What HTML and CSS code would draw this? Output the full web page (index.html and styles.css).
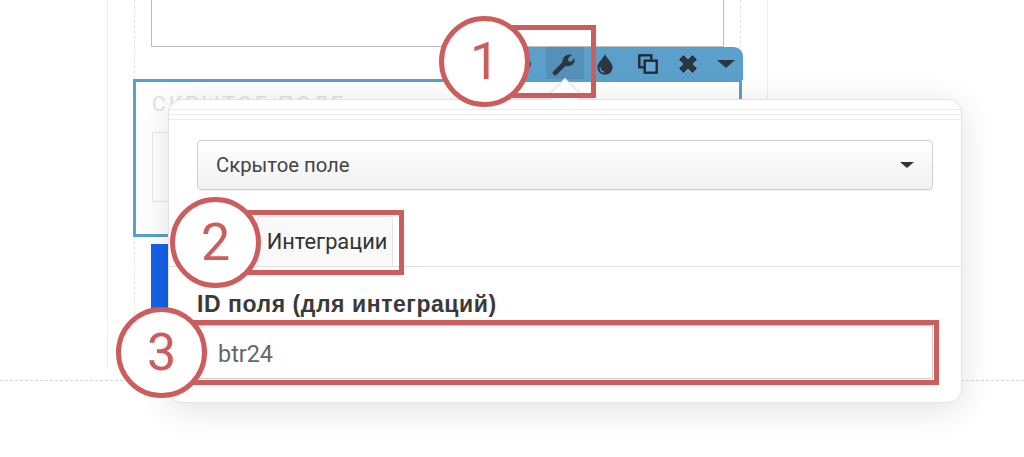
FILE: index.html
```html
<!DOCTYPE html>
<html lang="ru">
<head>
<meta charset="utf-8">
<title>Скрытое поле</title>
<link rel="stylesheet" href="styles.css">
</head>
<body>
<div class="stage">
  <div class="page">
    <div class="column">
      <div class="textarea"></div>
      <div class="toolbar">
        <span class="tool tool-eye"><i class="eye-dot"></i></span>
        <span class="tool tool-active"><svg viewBox="0 0 24 24" width="25" height="25"><path d="M4 21 12.500 12.500" fill="none" stroke="#2b3640" stroke-width="4.600" stroke-linecap="round"/><path d="M11.500 13.500C10 9.500 11.500 5.500 15 4c1.700-.8 3.500-.8 5-.2l-3.700 3.400.4 2.600 2.600.4 3.300-3.300c.5 1.700.2 3.600-1 5.100-2 2.700-5.600 3.300-8.600 2z" fill="#2b3640"/></svg></span>
        <span class="tool tool-drop"><svg viewBox="0 0 20 24" width="18" height="22"><path d="M10 1c1.500 4.500 8.500 9.500 8.500 15a8.500 8 0 0 1-17 0C1.500 10.500 8.500 5.500 10 1z" fill="#2b3640"/><path d="M4.500 15.500c0 3 1.800 5 4.500 5.500" fill="none" stroke="#5b9fcb" stroke-width="1.500"/></svg></span>
        <span class="tool tool-copy"><svg viewBox="0 0 20 20" width="20" height="20"><rect x="1.300" y="1.300" width="12" height="12" fill="none" stroke="#222c35" stroke-width="2.400"/><rect x="6.700" y="6.700" width="12" height="12" fill="#68a7cf" stroke="#222c35" stroke-width="2.400"/></svg></span>
        <span class="tool tool-close"><svg viewBox="0 0 20 20" width="20" height="20"><path d="M1.500 5.500 5.500 1.500 10 6l4.500-4.500 4 4L14 10l4.500 4.500-4 4L10 14l-4.500 4.500-4-4L6 10z" fill="#2b3640" stroke="#2b3640" stroke-width="1" stroke-linejoin="round"/></svg></span>
        <span class="tool tool-more"><span class="caret caret-tool"></span></span>
      </div>
      <div class="hidden-field">
        <div class="hidden-title">СКРЫТОЕ ПОЛЕ</div>
        <div class="hidden-input"></div>
      </div>
      <div class="submit"></div>
    </div>
  </div>
  <div class="rule"></div>

  <div class="popover">
    <span class="arrow"></span>
    <div class="stripes"><i></i><i></i><i></i></div>
    <div class="select-row">
      <div class="select">Скрытое поле<span class="caret"></span></div>
    </div>
    <div class="tabs"><div class="tab">Интеграции</div></div>
    <div class="form">
      <label class="label">ID поля (для интеграций)</label>
      <div class="input">btr24</div>
    </div>
  </div>

  <div class="mark mark-1"></div>
  <div class="mark mark-2"></div>
  <div class="mark mark-3"></div>
  <div class="badge badge-1">1</div>
  <div class="badge badge-2">2</div>
  <div class="badge badge-3">3</div>
</div>
</body>
</html>
```
FILE: styles.css
```css
* { box-sizing: border-box; }
html, body { margin: 0; padding: 0; background: #fff; }
.stage { position: relative; width: 1024px; height: 457px; overflow: hidden; font-family: Roboto, "Liberation Sans", sans-serif; }
.page { width: 661px; height: 370px; margin-left: 107px; padding: 0 26px; border-left: 1px solid #eeeeee; border-right: 1px solid #eeeeee; }
.column { height: 370px; border-left: 1px dashed #e2e2e2; border-right: 1px dashed #e2e2e2; padding: 0 16px; position: relative; }
.textarea { width: 573px; height: 47px; border: 1px solid #bdbdbd; border-top: 0; }
.toolbar { position: absolute; left: 380px; top: 47px; width: 228px; height: 33px; background: #5b9fcb; border-radius: 0 9px 0 0; display: flex; align-items: center; justify-content: flex-end; }
.tool { height: 33px; display: flex; align-items: center; justify-content: center; flex: none; }
.tool-eye { width: 38px; }
.eye-dot { display: block; width: 12px; height: 12px; margin-left: -4px; border-radius: 50%; background: #2b3640; }
.tool-active { width: 38px; background: #5490b8; }
.tool-active svg { margin-left: -3px; }
.tool-drop { width: 42px; }
.tool-copy { width: 44px; }
.tool-close { width: 36px; }
.tool-more { width: 37px; padding-left: 2px; }
.hidden-field { position: absolute; left: -2px; top: 79px; width: 609px; height: 158px; border: 3px solid #5b9fcb; padding: 11px 16px; }
.hidden-title { color: #e2e2e2; font-size: 21px; line-height: 22px; letter-spacing: 3px; white-space: nowrap; }
.hidden-input { margin-top: 17px; height: 70px; border: 1px solid #e6e6e6; }
.submit { position: absolute; left: 16px; top: 244px; width: 300px; height: 126px; background: #1561e8; }
.rule { height: 0; margin-top: 10px; border-top: 1px dashed #d4d4d4; }

.popover { position: absolute; left: 168px; top: 99px; width: 794px; height: 304px; background: #fff; border: 1px solid #e2e2e2; border-radius: 14px; box-shadow: 0 6px 34px rgba(0,0,0,.12); }
.arrow { position: absolute; left: 384px; top: -17px; width: 24px; height: 24px; background: #fff; border: 1px solid #dedede; border-right: 0; border-bottom: 0; transform: rotate(45deg); }
.stripes { position: relative; padding-top: 9px; }
.stripes i { display: block; height: 1px; margin-bottom: 4px; background: #ececec; }
.select-row { padding: 16px 28px 0; }
.select { height: 50px; border: 1px solid #cfcfcf; border-radius: 4px; background: linear-gradient(#ffffff, #f1f1f1); display: flex; align-items: center; justify-content: space-between; padding: 0 18px; color: #444; font-size: 20.3px; box-shadow: 0 1px 1px rgba(0,0,0,.06); }
.caret { width: 0; height: 0; border-left: 7px solid transparent; border-right: 7px solid transparent; border-top: 6px solid #333; }
.caret-tool { border-left-width: 9px; border-right-width: 9px; border-top-width: 8px; border-top-color: #2b3640; }
.tabs { margin-top: 26px; height: 51px; padding-left: 88px; border-bottom: 1px solid #e0e0e0; }
.tab { width: 136px; height: 50px; padding-left: 4px; background: #f9f9f9; border: 1px solid #e6e6e6; border-bottom: 0; border-radius: 4px 4px 0 0; text-align: center; line-height: 50px; font-size: 21.8px; color: #333; }
.form { padding: 25px 28px 0; }
.label { display: block; font-family: "Liberation Sans", Arial, sans-serif; font-weight: 700; font-size: 23px; line-height: 24px; letter-spacing: .55px; white-space: nowrap; color: #3a3a3a; }
.input { margin-top: 9px; height: 54px; border: 1px solid #d0d0d0; padding-left: 20px; line-height: 56px; font-size: 23.4px; color: #666; box-shadow: inset 0 1px 2px rgba(0,0,0,.08); }

.mark { position: absolute; border: 5px solid #cd5c5c; }
.mark-1 { left: 500px; top: 25px; width: 96px; height: 73px; }
.mark-2 { left: 240px; top: 210px; width: 164px; height: 65px; }
.mark-3 { left: 180px; top: 320px; width: 759px; height: 65px; }
.badge { position: absolute; width: 91px; height: 91px; border: 5px solid #cd5c5c; border-radius: 50%; background: #fff; color: #cd5c5c; font-size: 52px; font-weight: 400; display: flex; align-items: center; justify-content: center; }
.badge-1 { left: 439px; top: 16px; }
.badge-2 { left: 170px; top: 197px; }
.badge-3 { left: 116px; top: 307px; }
```
